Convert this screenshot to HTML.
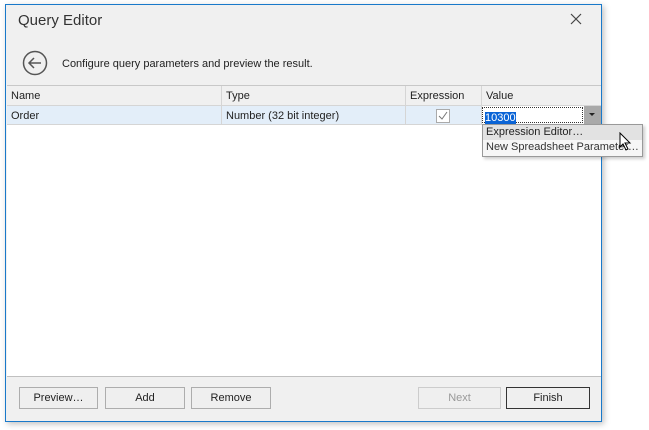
<!DOCTYPE html>
<html><head><style>
body{margin:0;width:649px;height:430px;background:#fff;position:relative;overflow:hidden;font-family:"Liberation Sans",sans-serif;font-size:11px;color:#222}
.win{position:absolute;left:5px;top:4px;width:595px;height:416px;border:1px solid #1979ca;background:#f0f0f0;box-shadow:2px 2px 6px rgba(0,0,0,.25)}
.a{position:absolute}
.grid{position:absolute;left:1px;top:80px;width:594px;height:290px;background:#fff;border-top:1px solid #c8c8c8;border-bottom:1px solid #c0c0c0}
.hdr{position:absolute;top:0;height:20px;background:#f0f0f0;border-bottom:1px solid #d5d5d5;line-height:21px;padding-left:4px;box-sizing:border-box;border-right:1px solid #d5d5d5}
.cell{position:absolute;top:20px;height:19px;background:#e3eef9;border-bottom:1px solid #d5d5d5;border-right:1px solid #d5d5d5;line-height:20px;padding-left:4px;box-sizing:border-box}
.btn{position:absolute;top:382px;height:22px;border:1px solid #adadad;box-sizing:border-box;text-align:center;line-height:21px;background:#efefef}
</style></head><body>
<div class="win">
<div class="a" style="left:12px;top:7px;font-size:15px;color:#333">Query Editor</div>
<svg class="a" style="left:564px;top:8px" width="12" height="12"><path d="M1 1L11 11M11 1L1 11" stroke="#444" stroke-width="1.2"/></svg>
<svg class="a" style="left:16px;top:45px" width="26" height="26"><circle cx="13" cy="13" r="11.5" fill="none" stroke="#555" stroke-width="1.5"/><path d="M19 13H7M12 8L7 13L12 18" fill="none" stroke="#555" stroke-width="1.5"/></svg>
<div class="a" style="left:56px;top:53px">Configure query parameters and preview the result.</div>
<div class="grid">
<div class="hdr" style="left:0;width:215px">Name</div>
<div class="hdr" style="left:215px;width:184px">Type</div>
<div class="hdr" style="left:399px;width:76px">Expression</div>
<div class="hdr" style="left:475px;width:119px;border-right:none">Value</div>
<div class="cell" style="left:0;width:215px">Order</div>
<div class="cell" style="left:215px;width:184px">Number (32 bit integer)</div>
<div class="cell" style="left:399px;width:76px"><div class="a" style="left:30px;top:3px;width:12px;height:12px;border:1px solid #aaa;background:#fff"><svg width="12" height="12" style="position:absolute;left:0;top:0"><path d="M2 6L5 9L10 2" fill="none" stroke="#777" stroke-width="1"/></svg></div></div>
<div class="cell" style="left:475px;width:119px;background:#fff;border-right:none;padding:0"><div class="a" style="left:0;top:1px;width:101px;height:16px;border:1px dotted #333;box-sizing:border-box"><span style="background:#0a64d6;color:#fff;margin-left:2px;line-height:14px">10300</span></div><div class="a" style="left:102px;top:0;width:17px;height:18px;background:#a9a9a9"><svg width="17" height="18"><path d="M5 7H11L8 10Z" fill="#222"/></svg></div></div>
</div>
<div class="a" style="left:476px;top:119px;width:159px;height:31px;background:#f6f6f6;border:1px solid #999;box-shadow:2px 2px 3px rgba(0,0,0,.2)">
<div style="height:15px;line-height:15px;padding-left:3px;background:#e2e2e2">Expression Editor…</div>
<div style="height:15px;line-height:15px;padding-left:3px;color:#333">New Spreadsheet Parameter…</div>
</div>
<svg class="a" style="left:613px;top:127px" width="14" height="20"><path d="M1 1L1 15L4 12L7 18L9 17L6 11L11 11Z" fill="#fff" stroke="#000"/></svg>
<div class="btn" style="left:13px;width:79px">Preview…</div>
<div class="btn" style="left:99px;width:80px">Add</div>
<div class="btn" style="left:185px;width:80px">Remove</div>
<div class="btn" style="left:412px;width:83px;color:#999;border-color:#ccc">Next</div>
<div class="btn" style="left:500px;width:84px;border-color:#333">Finish</div>
</div>
</body></html>
